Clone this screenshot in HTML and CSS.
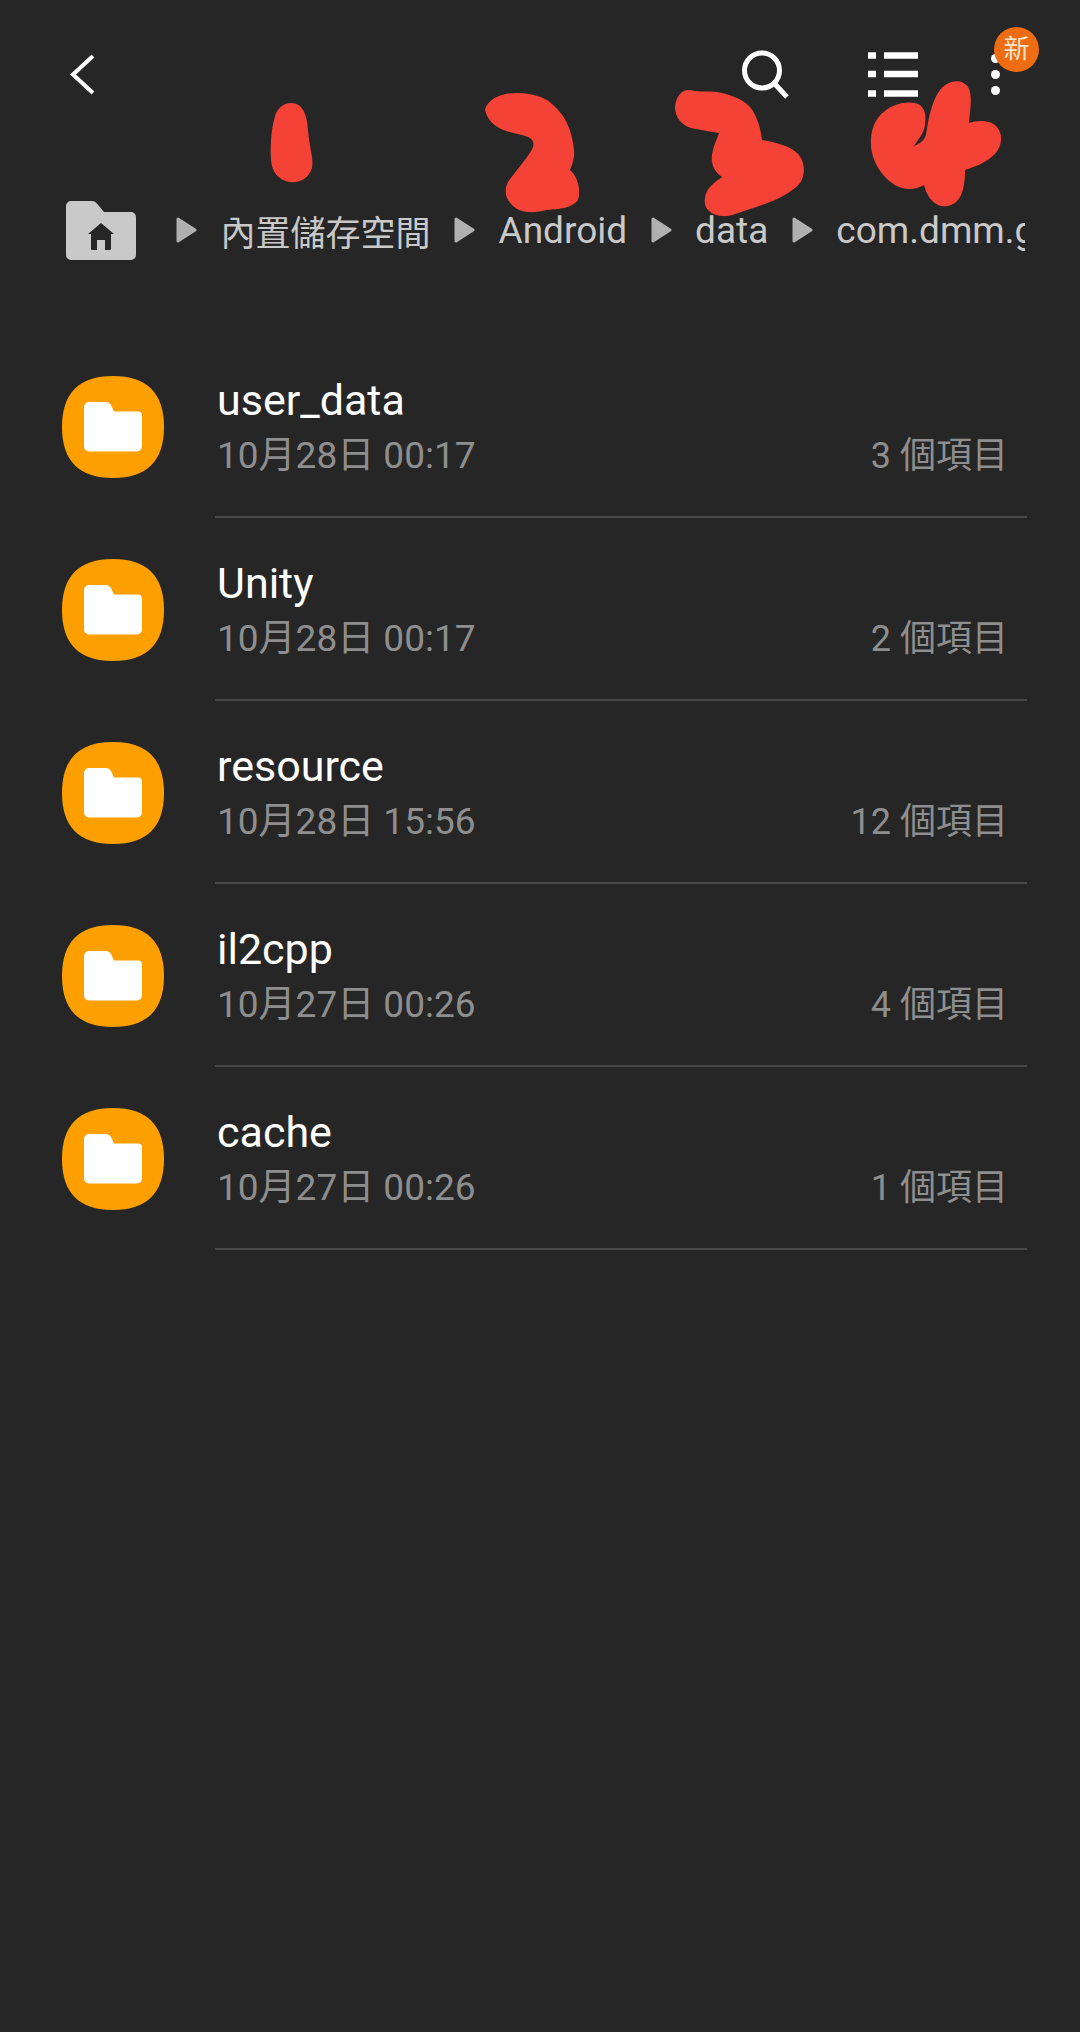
FILE: index.html
```html
<!DOCTYPE html>
<html lang="zh-Hant">
<head>
    <meta charset="UTF-8">
    <title>我的檔案</title>
    <link rel="stylesheet" href="styles.css">
</head>
<body>
    <svg class="defs" width="0" height="0">
        <symbol id="folder" viewBox="0 0 102 102">
            <path fill="#fe9f00" d="M51 0 C85 0 102 17 102 51 C102 85 85 102 51 102 C17 102 0 85 0 51 C0 17 17 0 51 0 Z"/>
            <path fill="#fff" d="M22 31 a5 5 0 0 1 5-5 h17 a6 6 0 0 1 5 3 l3 6.500 h24 a4 4 0 0 1 4 4 v31 a5 5 0 0 1-5 5 h-48 a5 5 0 0 1-5-5 z"/>
        </symbol>
        <symbol id="arrow" viewBox="0 0 21 26">
            <path fill="#b0b0b0" stroke="#b0b0b0" stroke-width="3" stroke-linejoin="round" d="M2 2 L19 13 L2 24 Z"/>
        </symbol>
    </svg>

    <header class="toolbar">
        <svg class="back" width="32" height="46" viewBox="0 0 32 46"><path d="M26 5 L6 23.500 L26 42"/></svg>
        <div class="actions">
            <svg class="search" width="48" height="50" viewBox="0 0 48 50"><circle cx="20" cy="21.500" r="17.500"/><path d="M32 34 L45 48"/></svg>
            <svg class="list" width="50" height="46" viewBox="0 0 50 46"><path d="M0 4.500 h8 M16 4.500 h34 M0 23 h8 M16 23 h34 M0 42.500 h8 M16 42.500 h34"/></svg>
            <div class="more"><i></i><i></i><i></i><span class="badge">新</span></div>
        </div>
    </header>

    <nav class="crumbs">
        <svg class="home" width="70" height="60" viewBox="0 0 70 60">
            <path fill="#c9c9c9" d="M0 6 a5 5 0 0 1 5-5 h21 a6 6 0 0 1 4.500 2 l7.500 9 h27 a5 5 0 0 1 5 5 v38 a5 5 0 0 1-5 5 h-60 a5 5 0 0 1-5-5 z"/>
            <path fill="#262626" d="M35 23 l13 11 h-3 v15 a1 1 0 0 1-1 1 h-5 v-10 h-8 v10 h-5 a1 1 0 0 1-1-1 v-15 h-3 z"/>
        </svg>
        <div class="path">
            <svg class="arrow"><use href="#arrow"/></svg><span class="zh">內置儲存空間</span>
            <svg class="arrow"><use href="#arrow"/></svg><span>Android</span>
            <svg class="arrow"><use href="#arrow"/></svg><span>data</span>
            <svg class="arrow"><use href="#arrow"/></svg><span>com.dmm.games</span>
        </div>
    </nav>

    <ul class="files">
        <li class="row">
            <svg class="icon"><use href="#folder"/></svg>
            <div class="info">
                <div class="name">user_data</div>
                <div class="meta"><span class="date">10月28日 00:17</span><span>3 個項目</span></div>
            </div>
        </li>
        <li class="row">
            <svg class="icon"><use href="#folder"/></svg>
            <div class="info">
                <div class="name">Unity</div>
                <div class="meta"><span class="date">10月28日 00:17</span><span>2 個項目</span></div>
            </div>
        </li>
        <li class="row">
            <svg class="icon"><use href="#folder"/></svg>
            <div class="info">
                <div class="name">resource</div>
                <div class="meta"><span class="date">10月28日 15:56</span><span>12 個項目</span></div>
            </div>
        </li>
        <li class="row">
            <svg class="icon"><use href="#folder"/></svg>
            <div class="info">
                <div class="name">il2cpp</div>
                <div class="meta"><span class="date">10月27日 00:26</span><span>4 個項目</span></div>
            </div>
        </li>
        <li class="row">
            <svg class="icon"><use href="#folder"/></svg>
            <div class="info">
                <div class="name">cache</div>
                <div class="meta"><span class="date">10月27日 00:26</span><span>1 個項目</span></div>
            </div>
        </li>
    </ul>

    <!-- hand drawn numbers on top of the screenshot -->
    <svg class="scribbles" width="1080" height="240" viewBox="0 0 1080 240">
        <path d="M291 103 C303 103 307 115 308 130 C309 145 314 160 312 168 C308 180 298 183 290 182 C278 180 272 172 271 160 C270 140 272 125 276 113 C280 106 285 103 291 103 Z"/>
        <path d="M485 110 C488 98 503 92 520 93 C535 94 547 98 553 105 C565 115 572 130 574 150 C575 158 572 165 570 170 C578 177 581 190 578 200 C572 208 560 209 547 210 C535 213 520 214 512 205 C505 198 504 190 508 182 C515 172 530 155 533 147 C535 140 530 137 522 135 C510 132 490 130 485 110 Z"/>
        <path d="M675 107 C676 95 683 89 690 90 C700 93 712 90 722 93 C738 97 750 103 755 115 C760 125 761 133 762 140 C775 142 790 146 797 153 C805 160 806 175 800 183 C790 195 770 203 747 210 C735 214 728 217 722 216 C710 215 703 208 705 198 C706 188 715 182 722 177 C712 170 710 160 713 150 C715 142 718 137 719 133 C705 131 698 129 691 128 C682 125 675 118 675 107 Z"/>
        <path d="M871 147 C870 130 875 118 885 111 C895 103 910 100 920 105 C926 110 926 118 925 125 C924 133 918 140 914 146 C919 144 924 141 926 135 C928 120 932 100 940 90 C948 80 962 78 968 87 C973 95 970 110 969 123 C978 120 990 120 996 126 C1003 133 1003 145 995 154 C987 162 975 167 965 170 C965 180 964 190 960 197 C955 206 945 208 938 205 C930 201 926 193 924 185 C915 190 905 190 897 186 C885 180 873 165 871 147 Z"/>
    </svg>
</body>
</html>
```

FILE: styles.css
```css
* {
    box-sizing: border-box;
}
body {
    margin: 0;
    height: 2032px;
    position: relative;
    overflow: hidden;
    background: #262626;
    font-family: Roboto, "Noto Sans CJK TC", sans-serif;
    color: #fff;
}
.defs {
    position: absolute;
}
.toolbar {
    display: flex;
    justify-content: space-between;
    align-items: center;
    height: 46px;
    margin-top: 51px;
    padding: 0 80px 0 67px;
}
.toolbar svg path,
.toolbar svg circle {
    fill: none;
    stroke: #fff;
}
.back path {
    stroke-width: 4;
}
.actions {
    display: flex;
    align-items: center;
}
.search {
    margin-right: 78px;
}
.search circle,
.search path {
    stroke-width: 5;
}
.list {
    margin-right: 73px;
}
.list path {
    stroke-width: 6.500;
}
.more {
    position: relative;
    display: flex;
    flex-direction: column;
    gap: 7px;
    width: 9px;
}
.more i {
    width: 9px;
    height: 9px;
    border-radius: 50%;
    background: #fff;
}
.badge {
    position: absolute;
    left: 3px;
    top: -27px;
    width: 45px;
    height: 45px;
    border-radius: 50%;
    background: #ee6d12;
    color: #fbe3cf;
    font-size: 26px;
    line-height: 45px;
    text-align: center;
}
.crumbs {
    display: flex;
    align-items: center;
    margin-top: 103px;
    padding-left: 66px;
}
.path {
    display: flex;
    align-items: center;
    width: 872.500px;
    margin-left: 16.500px;
    overflow: hidden;
    white-space: nowrap;
    color: #c9c9c9;
    font-size: 37px;
}
.path span {
    flex: none;
}
.path .zh {
    font-size: 35px;
}
.arrow {
    flex: none;
    width: 21px;
    height: 26px;
    margin: 0 23.500px;
}
.files {
    list-style: none;
    margin: 75px 0 0;
    padding: 0 0 0 62px;
}
.row {
    display: flex;
    height: 183px;
}
.icon {
    flex: none;
    width: 102px;
    height: 102px;
    margin-top: 41px;
}
.info {
    flex: 1;
    margin: 0 53px 0 51px;
    padding: 40px 0 0 2px;
    border-bottom: 2px solid #484848;
}
.name {
    font-size: 43px;
    line-height: 50px;
}
.meta {
    display: flex;
    justify-content: space-between;
    margin-top: 6px;
    padding-right: 19px;
    color: #8e8e8e;
    font-size: 36px;
    line-height: 50px;
}
.date {
    font-size: 37px;
}
.scribbles {
    position: absolute;
    left: 0;
    top: 0;
}
.scribbles path {
    fill: #f44336;
}
```
